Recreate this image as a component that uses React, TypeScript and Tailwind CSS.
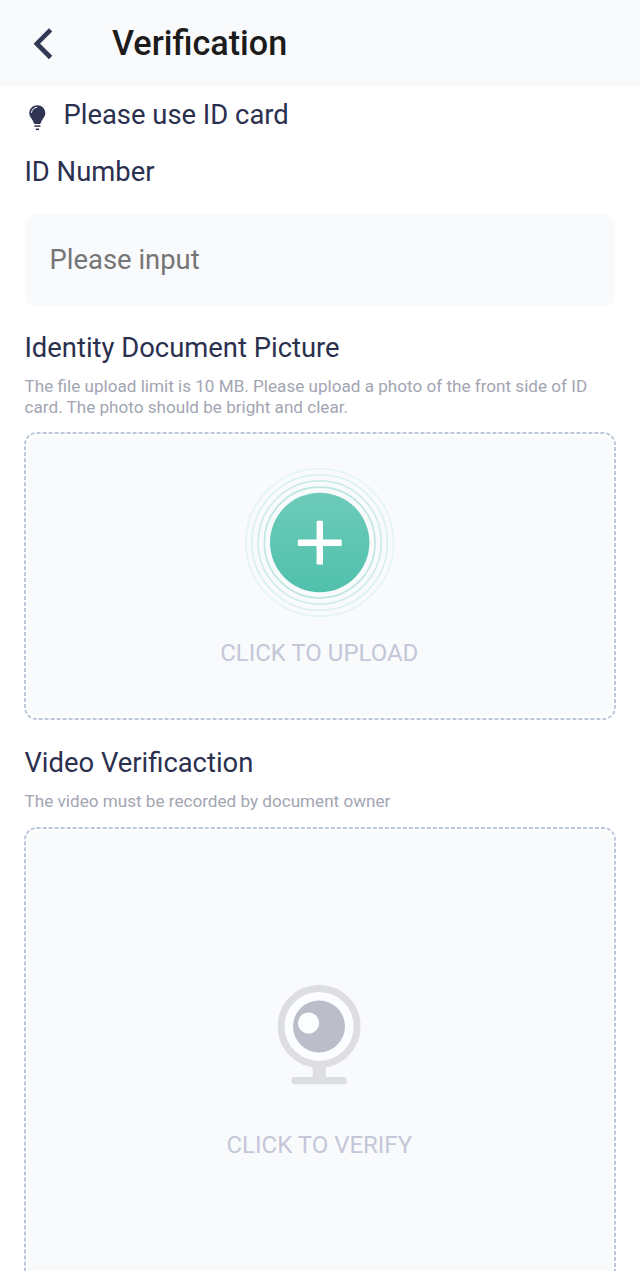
import React from "react";

const BackIcon = () => (
  <svg width="20" height="32" viewBox="0 0 20 32" fill="none">
    <path d="M17.6 1.9 L3.8 15.7 L17.6 29.5" stroke="#323754" strokeWidth="4.6" />
  </svg>
);

const BulbIcon = () => (
  <svg width="17" height="26" viewBox="0 0 17 26" fill="none">
    <path
      d="M8.3 0.2C3.8 0.2 0.3 3.7 0.3 8.1c0 4.3 3.3 5.9 4.4 9.7.2.8.7 1.2 1.4 1.2h4.4c.7 0 1.2-.4 1.4-1.2 1.1-3.8 4.4-5.4 4.4-9.7C16.3 3.7 12.8.2 8.3.2Z"
      fill="#2f3453"
    />
    <path d="M2.5 7.4C2.9 4.6 4.8 2.7 7.8 2.3" stroke="#fff" strokeWidth="1" strokeLinecap="round" />
    <path d="M5.4 21.1h6" stroke="#2f3453" strokeWidth="1.5" />
    <path d="M6.8 24.3h3.2" stroke="#2f3453" strokeWidth="1.6" />
  </svg>
);

const PlusIcon = () => (
  <svg width="150" height="150" viewBox="0.3 -0.5 150 150" fill="none">
    <defs>
      <linearGradient id="disc" x1="75" y1="25" x2="75" y2="125" gradientUnits="userSpaceOnUse">
        <stop stopColor="#6dcbba" />
        <stop offset="1" stopColor="#50c0ac" />
      </linearGradient>
    </defs>
    <circle cx="75" cy="75" r="73.8" stroke="#e4f4f3" strokeWidth="1.6" />
    <circle cx="75" cy="75" r="67.8" stroke="#d9f0ee" strokeWidth="1.6" />
    <circle cx="75" cy="75" r="61.6" stroke="#cdebe8" strokeWidth="1.6" />
    <circle cx="75" cy="75" r="55.4" stroke="#bde6e1" strokeWidth="1.6" />
    <circle cx="75" cy="75" r="49.7" fill="url(#disc)" />
    <rect x="53.1" y="72" width="44" height="6.4" rx="1.2" fill="#fff" />
    <rect x="71.9" y="53.3" width="6.4" height="43.8" rx="1.2" fill="#fff" />
  </svg>
);

const WebcamIcon = () => (
  <svg width="84" height="100" viewBox="0.6 0.3 84 100" fill="none">
    <rect x="35.3" y="80" width="13.2" height="14" fill="#dddee2" />
    <circle cx="41.7" cy="41.7" r="38" fill="#fcfdfe" stroke="#dddee2" strokeWidth="7" />
    <circle cx="41.6" cy="41.7" r="26" fill="#bbbec8" />
    <circle cx="31.2" cy="38.4" r="10.6" fill="#fcfdfe" />
    <rect x="14" y="92.4" width="55.4" height="7.2" rx="3.6" fill="#dddee2" />
  </svg>
);

type UploadBoxProps = {
  className: string;
  children: React.ReactNode;
};

// The dashed outline is drawn at 150% and scaled back, which gives shorter dashes
const UploadBox: React.FC<UploadBoxProps> = ({ className, children }) => (
  <div
    className={`relative rounded-[13px] bg-white p-1 before:pointer-events-none before:absolute before:left-0 before:top-0 before:h-[150%] before:w-[150%] before:origin-top-left before:scale-[0.66667] before:rounded-[19px] before:border-[3px] before:border-dashed before:border-[#bcc7da] before:content-[''] ${className}`}
  >
    <div className="flex h-full flex-col items-center rounded-[9px] bg-[#f9fafc] text-[24px] leading-[28px] text-[#c4c7d8]">
      {children}
    </div>
  </div>
);

const App: React.FC = () => {
  return (
    <div className="h-[1271px] w-[640px] overflow-hidden bg-white font-['Roboto',sans-serif] text-[27.4px] leading-[32px] text-[#2b304f]">
      {/* Header */}
      <header className="flex h-[87px] items-center bg-[#f9fafc] pl-[33px]">
        <button type="button" aria-label="Back">
          <BackIcon />
        </button>
        <h1 className="pb-px pl-[59px] text-[34.2px] font-medium leading-[40px] text-[#1c1c1c]">Verification</h1>
      </header>

      <main className="px-6">
        <div className="flex items-start pl-[5px] pt-[12px]">
          <div className="pt-[6px]">
            <BulbIcon />
          </div>
          <p className="pl-[17.5px]">Please use ID card</p>
        </div>

        {/* ID number */}
        <label htmlFor="id-number" className="mt-[25px] block pl-[0.4px]">
          ID Number
        </label>
        <div className="mt-[26px] px-[0.6px]">
          <input
            id="id-number"
            placeholder="Please input"
            className="block h-[93px] w-full rounded-[12px] bg-[#f9fafc] px-[25px] pb-[2px] placeholder:text-[#757575]"
          />
        </div>

        {/* Document picture */}
        <h2 className="mt-[25px] pl-[0.4px]">Identity Document Picture</h2>
        <p className="mt-[12px] pl-[0.6px] text-[17.12px] leading-[20.5px] text-[#a3a5b3]">
          The file upload limit is 10 MB. Please upload a photo of the front side of ID
          <br />
          card. The photo should be bright and clear.
        </p>
        <UploadBox className="mt-[15px] h-[288px]">
          <div className="pt-[31px]">
            <PlusIcon />
          </div>
          <p className="mt-[22px] pr-[1.5px]">CLICK TO UPLOAD</p>
        </UploadBox>

        {/* Video */}
        <h2 className="mt-[27px] pl-[0.4px]">Video Verificaction</h2>
        <p className="mt-[12px] pl-[0.6px] text-[17.12px] leading-[20.5px] text-[#a3a5b3]">
          The video must be recorded by document owner
        </p>
        <UploadBox className="mt-[15px] h-[520px]">
          <div className="pt-[154px]">
            <WebcamIcon />
          </div>
          <p className="mt-[46px] pr-[1.5px]">CLICK TO VERIFY</p>
        </UploadBox>
      </main>
    </div>
  );
};

export default App;
